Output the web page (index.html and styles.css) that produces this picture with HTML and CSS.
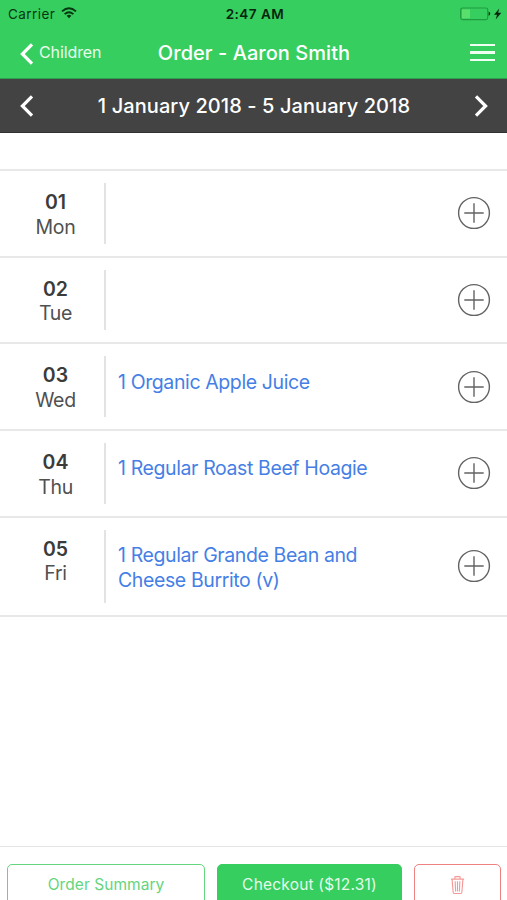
FILE: index.html
```html
<!DOCTYPE html>
<html lang="en">
<head>
<meta charset="utf-8">
<title>Order - Aaron Smith</title>
<link rel="stylesheet" href="styles.css">
</head>
<body>
<div class="app">
  <header class="top">
    <div class="status">
      <div class="carrier"><span>Carrier</span>
        <svg width="16" height="12" viewBox="0 0 16 12" fill="none" stroke="#06380f" stroke-width="1.9"><path d="M1 4.4Q8-1.9 15 4.4M3.6 7.1Q8 3.2 12.4 7.1"/><path d="M5.6 8.8Q8 6.9 10.4 8.8L8 11.2Z" fill="#06380f" stroke="none"/></svg>
      </div>
      <span class="time">2:47 AM</span>
      <svg class="battery" width="42" height="14" viewBox="0 0 42 14"><rect x=".7" y="1" width="27" height="11.6" rx="1.8" fill="none" stroke="#219b42" stroke-width="1.2"/><rect x="2" y="2.3" width="8" height="9" fill="#59df6c"/><path d="M28.6 4.6q3.4 2.200 0 4.400z" fill="#06380f"/><path d="M39.300 1.500L34 7.800h3L35.700 12.500l5.600-6.700h-3.200z" fill="#06260c"/></svg>
    </div>
    <nav class="nav">
      <a class="back"><svg width="14" height="22" viewBox="0 0 14 22"><path d="M12 1.3L2.4 11 12 20.7" fill="none" stroke="#fff" stroke-width="3.2"/></svg><span>Children</span></a>
      <h1>Order - Aaron Smith</h1>
      <span class="menu"><i></i><i></i><i></i></span>
    </nav>
  </header>
  <div class="week">
    <svg width="14" height="22" viewBox="0 0 14 22"><path d="M12 1.3L2.4 11 12 20.7" fill="none" stroke="#fff" stroke-width="3.2"/></svg>
    <h2>1 January 2018 - 5 January 2018</h2>
    <svg width="14" height="22" viewBox="0 0 14 22"><path d="M2 1.3L11.6 11 2 20.7" fill="none" stroke="#fff" stroke-width="3.2"/></svg>
  </div>
  <main class="days">
    <section class="day"><div class="date"><b>01</b><span>Mon</span></div><div class="items"></div><svg class="add" width="34" height="34" viewBox="0 0 34 34"><circle cx="17" cy="17" r="15.4"/><path d="M7.3 17h19.4M17 7.3v19.4"/></svg></section>
    <section class="day"><div class="date"><b>02</b><span>Tue</span></div><div class="items"></div><svg class="add" width="34" height="34" viewBox="0 0 34 34"><circle cx="17" cy="17" r="15.4"/><path d="M7.3 17h19.4M17 7.3v19.4"/></svg></section>
    <section class="day"><div class="date"><b>03</b><span>Wed</span></div><div class="items">1 Organic Apple Juice</div><svg class="add" width="34" height="34" viewBox="0 0 34 34"><circle cx="17" cy="17" r="15.4"/><path d="M7.3 17h19.4M17 7.3v19.4"/></svg></section>
    <section class="day"><div class="date"><b>04</b><span>Thu</span></div><div class="items">1 Regular Roast Beef Hoagie</div><svg class="add" width="34" height="34" viewBox="0 0 34 34"><circle cx="17" cy="17" r="15.4"/><path d="M7.3 17h19.4M17 7.3v19.4"/></svg></section>
    <section class="day tall"><div class="date"><b>05</b><span>Fri</span></div><div class="items">1 Regular Grande Bean and<br>Cheese Burrito (v)</div><svg class="add" width="34" height="34" viewBox="0 0 34 34"><circle cx="17" cy="17" r="15.4"/><path d="M7.3 17h19.4M17 7.3v19.4"/></svg></section>
  </main>
  <footer class="actions">
    <a class="btn summary">Order Summary</a>
    <a class="btn checkout">Checkout ($12.31)</a>
    <a class="btn trash"><svg width="15" height="20" viewBox="0 0 16 20" fill="none" stroke="#f39a97" stroke-width="1.2"><path d="M1 3.7h14M5.2 3.5V1.8q0-.8.8-.8h4q.8 0 .8.8v1.7M2.2 4l1.2 14q.1 1 1 1h7.2q.9 0 1-1l1.2-14M5.5 6l.5 11M8 6v11M10.5 6L10 17"/></svg></a>
  </footer>
</div>
</body>
</html>
```
FILE: styles.css
```css
* { box-sizing: border-box; }
body { margin: 0; font-family: Inter, "Liberation Sans", sans-serif; background: #fff; }
h1, h2 { margin: 0; font-weight: 500; white-space: nowrap; }
svg { display: block; flex: none; }
.app { width: 507px; height: 900px; overflow: hidden; display: flex; flex-direction: column; }
.top { height: 79px; flex: none; background: #37ce60; border-bottom: 1px solid #2f9f4d; }
.status { height: 27px; display: grid; grid-template-columns: 1fr auto 1fr; align-items: center; padding: 1px 5px 0 8px; color: #06380f; font-size: 13.5px; }
.carrier { display: flex; align-items: center; gap: 6px; letter-spacing: .45px; }
.carrier svg { margin-top: -2px; }
.time { font-weight: 600; color: #06260c; letter-spacing: .5px; }
.battery { justify-self: end; }
.nav { height: 51px; display: grid; grid-template-columns: 1fr auto 1fr; align-items: center; padding: 0 12px 0 20px; color: #fff; }
.back { display: flex; align-items: center; gap: 5px; font-size: 16px; letter-spacing: -.1px; color: #e6fceb; }
.back svg { margin-top: 3px; }
.back span { margin-top: -2px; }
.nav h1 { font-size: 20px; letter-spacing: .05px; margin: 0 7px 0 0; }
.menu { justify-self: end; width: 25px; display: flex; flex-direction: column; gap: 5px; }
.menu i { height: 2.5px; background: #effff2; }
.week { height: 54px; flex: none; display: flex; align-items: center; justify-content: space-between; padding: 0 19px 0 20px; background: #434343; color: #fff; border-bottom: 1px solid #303030; }
.week h2 { font-size: 20px; letter-spacing: .08px; }
.days { margin-top: 36px; flex: 1; border-top: 2px solid #e8e8e8; }
.day { height: 86.7px; display: flex; align-items: center; padding: 12px 16px 12px 7px; border-bottom: 2px solid #e8e8e8; }
.tall { height: 99.3px; }
.date { width: 99px; flex: none; align-self: stretch; border-right: 2px solid #e3e3e3; padding-top: 7px; display: flex; flex-direction: column; align-items: center; font-size: 19.5px; line-height: 24.5px; color: #505050; }
.date b { font-weight: 600; color: #3b3b3b; }
.date span { letter-spacing: -.3px; }
.items { flex: 1; align-self: flex-start; padding: 13.4px 0 0 12px; font-size: 19.5px; line-height: 24.5px; letter-spacing: -.39px; color: #457fe6; white-space: nowrap; }
.add { fill: none; stroke: #636363; stroke-width: 1.4; }
.actions { height: 54px; flex: none; border-top: 1px solid #e6e6e6; padding: 17px 6px 0 7px; display: grid; grid-template-columns: 198px 185px 87px; gap: 12px; }
.btn { height: 42px; border-radius: 5px; border: 1.5px solid; display: flex; justify-content: center; align-items: center; padding-bottom: 1px; font-size: 15.5px; white-space: nowrap; }
.summary { color: #65d57e; letter-spacing: .05px; }
.checkout { color: #e4fbe9; background: #37ce60; border-color: #37ce60; letter-spacing: .2px; }
.trash { border-color: #ed8280; }
```
